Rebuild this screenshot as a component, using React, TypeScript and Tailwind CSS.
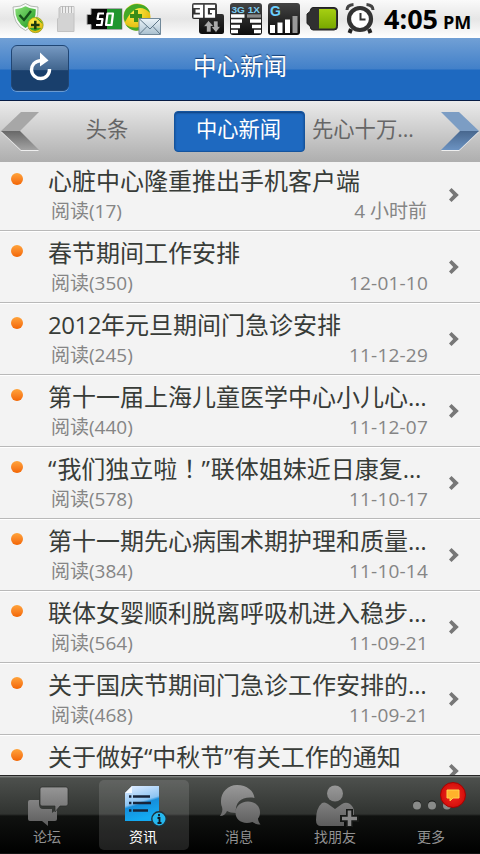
import React from "react";

type Item = { title: React.ReactNode; count?: number; date?: string };

const items: Item[] = [
  { title: "心脏中心隆重推出手机客户端", count: 17, date: "4 小时前" },
  { title: "春节期间工作安排", count: 350, date: "12-01-10" },
  { title: <><span className="tracking-[-0.5px]">2012</span>年元旦期间门急诊安排</>, count: 245, date: "11-12-29" },
  { title: "第十一届上海儿童医学中心小儿心…", count: 440, date: "11-12-07" },
  {
    title: (
      <>
        “<span className="ml-px">我们独立啦</span>
        <span className="font-['Noto_Sans_CJK_TC',sans-serif] leading-none">！</span>”<span className="ml-px">联体姐妹近日康复…</span>
      </>
    ),
    count: 578,
    date: "11-10-17",
  },
  { title: "第十一期先心病围术期护理和质量…", count: 384, date: "11-10-14" },
  { title: "联体女婴顺利脱离呼吸机进入稳步…", count: 564, date: "11-09-21" },
  { title: "关于国庆节期间门急诊工作安排的…", count: 468, date: "11-09-21" },
  { title: "关于做好“中秋节”有关工作的通知" },
];

function StatusIcons() {
  return (
    <svg width="380" height="38" viewBox="0 0 380 38" className="shrink-0">
      <defs>
        <linearGradient id="shield" x1="0" y1="0" x2="1" y2="1">
          <stop offset="0" stopColor="#8be07a" />
          <stop offset="1" stopColor="#1c9a1e" />
        </linearGradient>
        <radialGradient id="ball" cx=".4" cy=".3" r=".8">
          <stop offset="0" stopColor="#fff04a" />
          <stop offset="1" stopColor="#dcae00" />
        </radialGradient>
        <linearGradient id="dark" x1="0" y1="0" x2="0" y2="1">
          <stop offset="0" stopColor="#444" />
          <stop offset="1" stopColor="#0c0c0c" />
        </linearGradient>
        <linearGradient id="lime" x1="0" y1="0" x2="0" y2="1">
          <stop offset="0" stopColor="#a6cf12" />
          <stop offset="1" stopColor="#78a800" />
        </linearGradient>
        <linearGradient id="mail" x1="0" y1="0" x2="0" y2="1">
          <stop offset="0" stopColor="#edf5fa" />
          <stop offset="1" stopColor="#a9c0cf" />
        </linearGradient>
      </defs>
      {/* security shield */}
      <path d="M25.5 3.5 Q30 7 38 7 Q39 24 25.5 30.5 Q13 25 13 7 Q21 7 25.5 3.5Z" fill="#f7faf7" stroke="#a2aaa2" strokeWidth=".8" />
      <path d="M25.5 6.3 Q30 9 35.8 9.3 Q36.5 22 25.5 28 Q15 22 15.2 9.3 Q21 9 25.5 6.3Z" fill="url(#shield)" />
      <path d="M19.5 15 L24 20 L31 11" fill="none" stroke="#14501a" strokeWidth="2.4" />
      <circle cx="35.5" cy="25" r="7.7" fill="url(#ball)" stroke="#8d9b18" strokeWidth=".7" />
      <path d="M29 28 Q35 34 41.5 28 Q35 27 29 28Z M35 17.5 Q41 19 42.5 24 Q39 20 35 17.5Z" fill="#38a52a" />
      <path d="M35.3 20.8v8.4M31 25h8.6" stroke="#1c380e" strokeWidth="2.5" />
      {/* memory card */}
      <path d="M60.5 6.5H74V31.5H57.5V19L59 17.5V8Z" fill="#d3d3d3" stroke="#c2c2c2" />
      <path d="M61 7h12.500v6H61z" fill="#eee" />
      <path d="M62.5 6v7M65.5 6v7M68.5 6v7M71.5 6v7" stroke="#b5b5b5" />
      {/* battery percentage */}
      <path d="M91 8.5h31v21H91v-5h-4v-10h4z" fill="#080808" stroke="#a9a9a9" />
      <path d="M107 9h14.5v20H107z" fill="#20962f" />
      <path d="M104 13.5H98.5L97.5 19H102.5L101.5 25H96M107.500 13.5H113L111.500 25H106Z" fill="none" stroke="#fff" strokeWidth="2.2" strokeLinejoin="round" />
      {/* safety ball with envelope */}
      <circle cx="137" cy="17" r="13.5" fill="url(#ball)" />
      <path d="M126 9 Q134 1 144 5.5 Q149 8 150 13 Q143 6 136 9 Q130 12 125 22 Q122 15 126 9Z" fill="#44a928" />
      <path d="M125 24 Q131 29 139 27 L143 29 Q132 34 125 24Z" fill="#44a928" />
      <path d="M136 10v12M130 16h12" stroke="#3b8d18" strokeWidth="4" />
      <path d="M139 18.5h21.5v16H139z" fill="url(#mail)" stroke="#71899a" />
      <path d="M139.5 19L150 29L160 19M139.5 34L147 26.5M160 34L153 26.5" fill="none" stroke="#5e7788" />
      {/* data connection */}
      <path d="M194 3h21a2 2 0 0 1 2 2v9h5a2 2 0 0 1 2 2v16a2 2 0 0 1-2 2h-20a3 3 0 0 1-3-3V19h-5a2 2 0 0 1-2-2V5a2 2 0 0 1 2-2z" fill="url(#dark)" />
      <path d="M193.500 6.300H201.500V16.200H193.500M195.500 11.200H201.500M215 6.300H206.300V16.200H213.500V11.500H210" fill="none" stroke="#fff" strokeWidth="3.200" />
      <path d="M208.500 20.500l5.500 6H211v5.500h-4.500v-5.500h-3zM216 32.500l-5-6h2.500v-5.500h4.500v5.500h2.500z" fill="#aaa" stroke="#111" strokeWidth=".6" />
      {/* dual signal meter */}
      <rect x="230" y="3" width="32" height="32" rx="3" fill="url(#dark)" />
      <text x="231.500" y="12.500" fontSize="9.500" fontWeight="700" fill="#7bcdf2" fontFamily="Liberation Sans, sans-serif" textLength="28.500" lengthAdjust="spacingAndGlyphs">3G 1X</text>
      <path d="M231 16h13.500M231 21h11M231 26.500h9M231 31.500h7M250 21H261M252 26.500H261M254 31.500h7" stroke="#fff" strokeWidth="3.300" />
      <path d="M247 16h14" stroke="#888" strokeWidth="3.300" />
      {/* signal strength */}
      <rect x="268" y="3" width="32" height="32" rx="3" fill="url(#dark)" />
      <text x="270" y="15.500" fontSize="14" fontWeight="700" fill="#6ccfff" fontFamily="Liberation Sans, sans-serif">G</text>
      <path d="M270 25h5v8h-5zM277.500 22.500h5V33h-5zM285 19.500h5V33h-5z" fill="#fff" />
      <path d="M292.500 16h5v17h-5z" fill="#999" />
      {/* battery */}
      <path d="M313 7.500h21q3.500 0 3.500 3.500v15.500q0 3.500-3.500 3.500H313q-2.500 0-3-4l-3-2.500V14l3-2.500q.5-4 3-4z" fill="#303030" stroke="#222" />
      <path d="M319 9h14.500q2.500 0 2.500 2.500v14.500q0 2.500-2.500 2.500H319z" fill="url(#lime)" />
      {/* alarm clock */}
      <path d="M347 10 Q347 5 353.500 4.500M366.500 4.500Q373 5 373 10" fill="none" stroke="#444" strokeWidth="3" />
      <path d="M351 29l-1.500 4M369 29l1.500 4" stroke="#222" strokeWidth="4" />
      <circle cx="360" cy="19" r="11" fill="#fff" stroke="#333" strokeWidth="4.200" />
      <path d="M360.500 13v6.500h5" fill="none" stroke="#333" strokeWidth="2" />
    </svg>
  );
}

function Chevron() {
  return (
    <svg width="12" height="16" viewBox="0 0 12 16">
      <path d="M1 3.600L3.500 1L10.800 8L3.500 15L1 12.400L5.200 8Z" fill="#777" />
    </svg>
  );
}

function Arrow({ right = false }: { right?: boolean }) {
  const top = right ? "#7c9dc4" : "#a7a7a7";
  const dark = right ? "#48678e" : "#686868";
  const low = right ? "#6c93c2" : "#a3a3a3";
  const id = right ? "arrowR" : "arrowL";
  return (
    <svg width="40" height="40" viewBox="0 0 40 40" className={right ? "-scale-x-100" : ""}>
      <defs>
        <linearGradient id={id} x1="0" y1="0" x2="0" y2="1">
          <stop offset="0" stopColor={dark} />
          <stop offset="1" stopColor={low} />
        </linearGradient>
      </defs>
      <path d="M1 21L21 40H39L20.500 21Z" fill="#eeeeee" />
      <path d="M1 20L21 1H39L20 20Z" fill={top} />
      <path d="M1 20H20L39 39H21Z" fill={`url(#${id})`} />
    </svg>
  );
}

function NavIcon({ kind }: { kind: number }) {
  return (
    <svg width="60" height="44" viewBox="0 0 60 44">
      <defs>
        <linearGradient id="grey" gradientUnits="userSpaceOnUse" x1="0" y1="2" x2="0" y2="44">
          <stop offset="0" stopColor="#999" />
          <stop offset="1" stopColor="#5b5b5b" />
        </linearGradient>
        <linearGradient id="page" x1="0" y1="0" x2=".3" y2="1">
          <stop offset=".1" stopColor="#d4e7ff" />
          <stop offset=".53" stopColor="#8cc4f2" />
          <stop offset=".6" stopColor="#168edb" />
          <stop offset="1" stopColor="#13aaf2" />
        </linearGradient>
      </defs>
      {kind === 0 && (
        <g fill="url(#grey)" transform="translate(1 0)">
          <path d="M12 17h9v4q0 5 4 5h9v4l5-4V36q0 2-2 2h-7v5l-6-5H12q-2 0-2-2V19q0-2 2-2z" />
          <path d="M24 4h24q2 0 2 2v15q0 2-2 2h-6l-5 6v-6H24q-2 0-2-2V6q0-2 2-2z" stroke="#292b29" strokeWidth=".7" />
        </g>
      )}
      {kind === 1 && (
        <g transform="translate(1 0)">
          <path d="M18 3h27v35H11V10z" fill="url(#page)" />
          <path d="M11 10l7-7v7z" fill="#f4f9ff" />
          <path d="M19 13.500h17M19 20h18M19 27.500h15" stroke="#17243a" strokeWidth="2.400" />
          <path d="M15 13.500h2.400M15 20h2.400M15 27.500h2.400" stroke="#17243a" strokeWidth="2.400" />
          <circle cx="45" cy="36" r="7.200" fill="#25b7ee" stroke="#20323b" strokeWidth="1.400" />
          <path d="M43.500 35h2v5M43.500 40h4M45 31v2.300" fill="none" stroke="#101a24" strokeWidth="1.800" />
        </g>
      )}
      {kind === 2 && (
        <g fill="url(#grey)" transform="translate(1 0)">
          <path d="M27 2c10 0 17 6 17.500 13-12-2-20 4-18.500 15-4 0-7-1-9-2-1 3-4 5-7 5 2-3 3-6 2-9-1-2-1-4-1-6C11 9 18 2 27 2z" />
          <path d="M38 18.500c7 0 12 4.500 12 11 0 3-1 5-2 6 0 2 1 4 2.500 6-3 0-6-1-8-2.500-10 3-17-2-17-9.500 0-6 5-11 12.500-11z" />
        </g>
      )}
      {kind === 3 && (
        <g fill="url(#grey)">
          <circle cx="30" cy="10.500" r="8" />
          <path d="M17 20q3-1.500 6 1l7 5 7-5q4-2.500 8 0 4 3 4 8v5H39v9H16q-5 0-5-6 0-12 6-17z" />
          <path d="M41 26h7v6h6v7h-6v5h-7v-5h-6v-7h6z" fill="#171917" />
          <path d="M42.700 27.500h3.600v6.300H52v3.400h-5.700V43h-3.600v-5.800H37v-3.400h5.700z" fill="#888" />
        </g>
      )}
      {kind === 4 && (
        <g transform="translate(4 0)">
          <path d="M8 21.500a4 4 0 1 1 8 0M23 21.500a4 4 0 1 1 8 0M38 21.500a4 4 0 1 1 8 0" fill="#151715" />
          <circle cx="12" cy="22.500" r="4" fill="#898b89" />
          <circle cx="27" cy="22.500" r="4" fill="#898b89" />
          <circle cx="42" cy="22.500" r="4" fill="#898b89" />
        </g>
      )}
    </svg>
  );
}

const nav = ["论坛", "资讯", "消息", "找朋友", "更多"];

export default function App() {
  return (
    <div className="flex h-[854px] w-[480px] flex-col overflow-hidden bg-[#f3f3f3] font-['Open_Sans','Noto_Sans_CJK_SC',sans-serif]">
      <div className="flex h-[38px] shrink-0 bg-linear-to-b from-[#fafafa] via-[#e6e6e6] to-[#fff]">
        <StatusIcons />
        <div className="flex items-baseline whitespace-nowrap pl-1 font-bold text-black">
          <span className="text-[27px] leading-[38px]">4:05</span>
          <span className="ml-[5px] text-[18px]">PM</span>
        </div>
      </div>

      <header className="grid h-[63px] shrink-0 grid-cols-[80px_1fr_80px] border-b border-[#071c44] bg-[linear-gradient(#71a0d5_0,#4280c9_31px,#1e69c0_32px,#1e69c0_100%)]">
        <div className="pt-[7px] pl-[11px]">
          <button className="flex h-[46px] w-[58px] items-center justify-center rounded-[6px] border border-[#204675] bg-linear-to-b from-[#7699c2] from-0% via-[#41658e] via-54% to-[#193f6c] to-56% shadow-[0_1px_0_#6a9ad1]">
            <svg width="28" height="32" viewBox="0 0 28 32">
              <path d="M15.500 8.500C8 9 5.500 14 5.500 18A9 9 0 1 0 23.500 17" fill="none" stroke="#fff" strokeWidth="3.400" />
              <path d="M14 .5L22.500 8.500L14 14.500Z" fill="#fff" />
            </svg>
          </button>
        </div>
        <h1 className="text-center text-[23.500px] leading-[57px] text-white [text-shadow:0_-1px_1px_#164078]">中心新闻</h1>
      </header>

      <div className="flex h-[61px] shrink-0 bg-linear-to-b from-[#ebebeb] to-[#aeaeae] text-[21.300px] text-[#666]">
        <div className="w-10 pt-[10px]"><Arrow /></div>
        <div className="w-[134px] text-center leading-[56px]">头条</div>
        <div className="h-full w-[131px] pt-[10px]">
          <div className="h-[41px] rounded-[4px] border border-[#14549e] bg-[#1e69c0] pr-[2px] text-center leading-[34px] text-white shadow-[inset_0_1px_2px_#103d78]">中心新闻</div>
        </div>
        <div className="w-[135px] pl-[7px] leading-[56px] whitespace-nowrap">先心十万…</div>
        <div className="w-10 pt-[10px]"><Arrow right /></div>
      </div>

      <main className="h-[613px] shrink-0 overflow-hidden">
        <ul className="-mt-[3px]">
          {items.map((item, i) => (
            <li key={i} className="flex h-[72px] border-b border-[#b9b9b9] bg-[#f3f3f3] shadow-[inset_0_1px_0_#fff]">
              <div className="w-12 pt-[14px] pl-[11px]">
                <div className="size-3 rounded-full bg-linear-to-b from-[#ffa33a] to-[#f26500]" />
              </div>
              <div className="w-[381px] whitespace-nowrap">
                <div className="h-[39px] text-[24px] leading-[44px] text-[#383c38]">{item.title}</div>
                {item.date && (
                  <div className="flex justify-between pr-px pl-[3px] text-[19px] leading-[27px] text-[#858585]">
                    <span>阅读({item.count})</span>
                    <span className={i === 0 ? "mr-px" : "tracking-[0.2px]"}>{item.date}</span>
                  </div>
                )}
              </div>
              <div className="pt-7 pl-[19px]"><Chevron /></div>
            </li>
          ))}
        </ul>
      </main>

      <nav className="grid h-[79px] shrink-0 grid-cols-5 border-t border-[#252525] bg-[linear-gradient(#929492_0,#4d504d_2px,#303330_38px,#101210_40px,#000_77px,#252525_78px)]">
        {nav.map((label, i) => (
          <div key={label} className="flex justify-center pt-1">
            <div className={"relative flex h-[70px] w-[90px] flex-col items-center rounded-[5px] pt-[3px] pr-[2px] " + (i === 1 ? "bg-white/12 text-white" : "text-[#929292]")}>
              <NavIcon kind={i} />
              <span className="text-[14px] leading-[20px]">{label}</span>
              {i === 4 && (
                <div className="absolute top-[2px] left-[53px] flex size-[26px] items-center justify-center rounded-full border border-[#a60000] bg-radial from-[#f52820] to-[#c80000]">
                  <svg width="14" height="13" viewBox="0 0 14 13"><path d="M1 1h12v8H7l-3 3V9H1z" fill="#ffb32b" stroke="#ffd34c" /></svg>
                </div>
              )}
            </div>
          </div>
        ))}
      </nav>
    </div>
  );
}
